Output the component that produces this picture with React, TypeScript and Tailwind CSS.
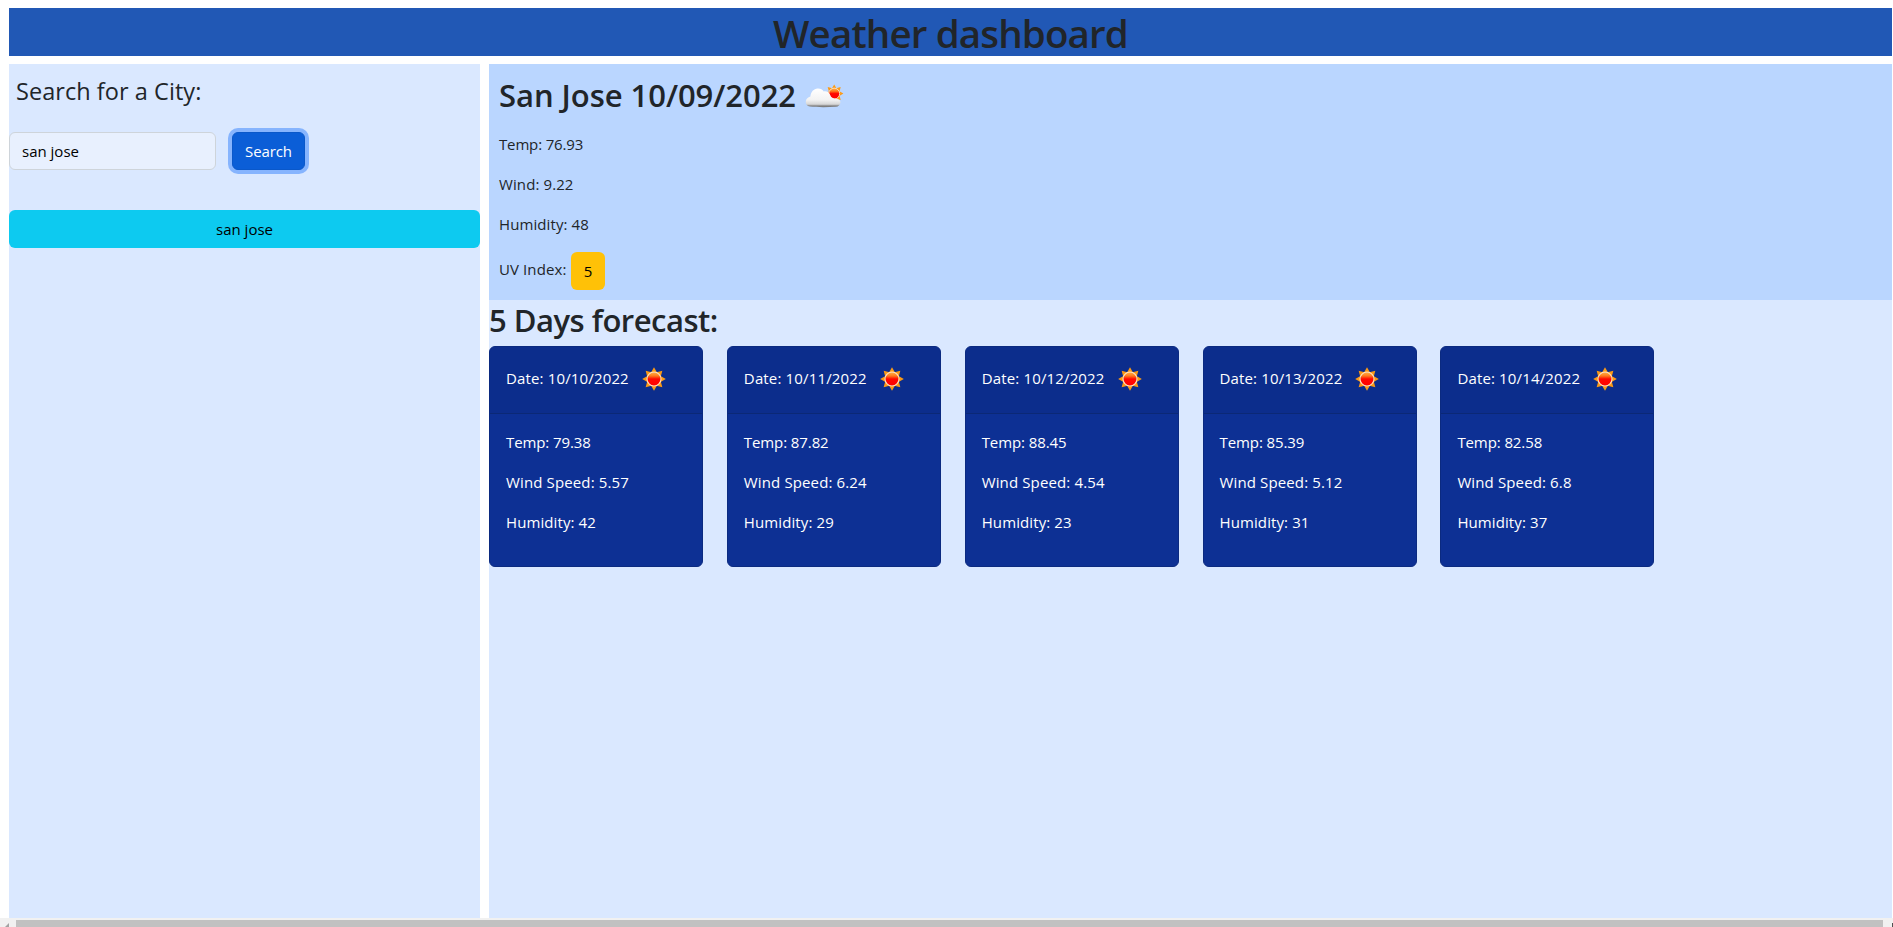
const days = [
  { date: '10/10/2022', temp: '79.38', wind: '5.57', humidity: '42' },
  { date: '10/11/2022', temp: '87.82', wind: '6.24', humidity: '29' },
  { date: '10/12/2022', temp: '88.45', wind: '4.54', humidity: '23' },
  { date: '10/13/2022', temp: '85.39', wind: '5.12', humidity: '31' },
  { date: '10/14/2022', temp: '82.58', wind: '6.8', humidity: '37' },
];

const rays = [0, 45, 90, 135, 180, 225, 270, 315];

function SunShape({ id }: { id: string }) {
  return (
    <>
      <defs>
        <linearGradient id={id} x1="0" y1="0" x2="0" y2="1">
          <stop offset="0" stopColor="#ffb347" />
          <stop offset="0.28" stopColor="#ff7a1c" />
          <stop offset="0.5" stopColor="#ff0800" />
          <stop offset="1" stopColor="#ff0000" />
        </linearGradient>
      </defs>
      {rays.map((a) => (
        <path key={a} d="M-3 -6.6 L0 -11.8 L3 -6.6 Z" fill="#fb9a14" transform={`rotate(${a})`} />
      ))}
      <circle r="7" fill={`url(#${id})`} stroke="#ffe3c4" strokeWidth="1.1" />
    </>
  );
}

function Sun({ id }: { id: string }) {
  return (
    <svg className="mt-px ml-[13px] h-6 w-6" viewBox="-12 -12 24 24" aria-hidden="true">
      <SunShape id={id} />
    </svg>
  );
}

function CloudSun() {
  return (
    <svg className="mt-1 ml-[9px] h-[26px] w-[40px]" viewBox="0 0 40 26" aria-hidden="true">
      <defs>
        <linearGradient id="cloud" x1="0" y1="0" x2="0" y2="1">
          <stop offset="0" stopColor="#ffffff" />
          <stop offset="0.6" stopColor="#f3f3f3" />
          <stop offset="0.84" stopColor="#d6d6d6" />
          <stop offset="0.93" stopColor="#858585" />
          <stop offset="1" stopColor="#777777" />
        </linearGradient>
      </defs>
      <g transform="translate(29.2 9.6) scale(0.78)">
        <SunShape id="cloud-sun" />
      </g>
      <path
        d="M5 22.6 C2 22 0.4 19.8 0.8 17.2 C1.2 14.6 3 13 5.4 12.4 C5.8 8 8.8 4.8 12.6 4.6 C15.6 4.5 17.6 5.6 18.8 7.4 C21.6 6.8 24.4 8.4 25.2 11 C26 13.6 28 14.6 31.4 14.8 C34 15 35.8 16.6 35.4 18.8 C35 21.2 33.4 22.6 31 22.8 C22 23.4 12 23.4 5 22.6 Z"
        fill="url(#cloud)"
      />
    </svg>
  );
}

export default function App() {
  return (
    <div className="flex h-[927px] w-full flex-col overflow-hidden bg-white pt-2 font-['Open_Sans','Noto_Sans',sans-serif] text-[15px] leading-6 text-[#212529]">
      <header className="mr-px ml-[9px] h-12 shrink-0 bg-[#2158b5]">
        <h1 className="text-center text-[38.5px] leading-[50px] font-semibold tracking-[-0.85px]">Weather dashboard</h1>
      </header>

      <main className="mt-2 mr-px ml-[9px] flex h-[854px] shrink-0 gap-[9px]">
        <aside className="w-[471px] shrink-0 bg-[#dae8ff]">
          <h2 className="pt-[13px] pl-[7px] text-[23.5px] leading-[29px] tracking-[0.05px]">Search for a City:</h2>
          <div className="mt-[26px] flex gap-4">
            <input
              className="h-[38px] w-[207px] rounded-md border border-[#ced4da] bg-[#e8f0fe] px-3 text-black outline-none"
              defaultValue="san jose"
              aria-label="City"
            />
            <button className="h-[38px] w-[73px] rounded-md border border-[#0a58ca] bg-[#0b5ed7] tracking-[-0.1px] text-white ring-4 ring-[#86b4fe]">
              Search
            </button>
          </div>
          <button className="mt-10 h-[38px] w-full rounded-md bg-[#0dcaf0] text-black">san jose</button>
        </aside>

        <section className="min-w-0 grow bg-[#dae8ff]">
          <div className="h-[236px] bg-[#bad6ff] pt-3 pl-[10px]">
            <div className="flex h-[38px] items-center">
              <h2 className="text-[31px] leading-[38px] font-semibold tracking-[-0.05px]">San Jose 10/09/2022</h2>
              <CloudSun />
            </div>
            <p className="mt-[18px] tracking-[-0.15px]">Temp: 76.93</p>
            <p className="mt-4 tracking-[0.1px]">Wind: 9.22</p>
            <p className="mt-4 tracking-[0.1px]">Humidity: 48</p>
            <div className="mt-4 flex">
              <p className="mt-[5px] w-[72px] tracking-[0.1px]">UV Index:</p>
              <button className="h-[38px] w-[34px] rounded-md bg-[#ffc107] text-black">5</button>
            </div>
          </div>

          <h2 className="h-[46px] pt-px text-[31px] leading-[38px] font-semibold tracking-[-0.5px]">5 Days forecast:</h2>

          <div className="flex gap-[23.85px]">
            {days.map((d, i) => (
              <article
                key={d.date}
                className="h-[221px] w-[214px] shrink-0 overflow-hidden rounded-md border border-[#0b2a80] bg-[#0d3094] text-white"
              >
                <div className="flex h-[67px] items-start border-b border-[#0b2876] bg-[#0c2d8c] pt-[19px] pl-4">
                  <span className="tracking-[0.15px] whitespace-nowrap">Date: {d.date}</span>
                  <Sun id={`sun-${i}`} />
                </div>
                <div className="flex flex-col gap-4 pt-4 pl-4">
                  <p className="tracking-[-0.1px]">Temp: {d.temp}</p>
                  <p className="tracking-[0.13px]">Wind Speed: {d.wind}</p>
                  <p className="tracking-[0.1px]">Humidity: {d.humidity}</p>
                </div>
              </article>
            ))}
          </div>
        </section>
      </main>

      <div className="flex h-[9px] shrink-0 bg-[#f1f1f1] pt-[2px]">
        <svg className="h-[7px] w-4" viewBox="0 0 16 7" aria-hidden="true">
          <path d="M9 3 V7 H5 Z" fill="#a3a3a3" />
        </svg>
        <div className="h-[7px] w-[1867px] bg-[#c1c1c1]" />
        <svg className="ml-[9px] h-[7px] w-px" viewBox="0 0 1 7" aria-hidden="true">
          <path d="M0 3 H1 V7 H0 Z" fill="#505050" />
        </svg>
      </div>
    </div>
  );
}
